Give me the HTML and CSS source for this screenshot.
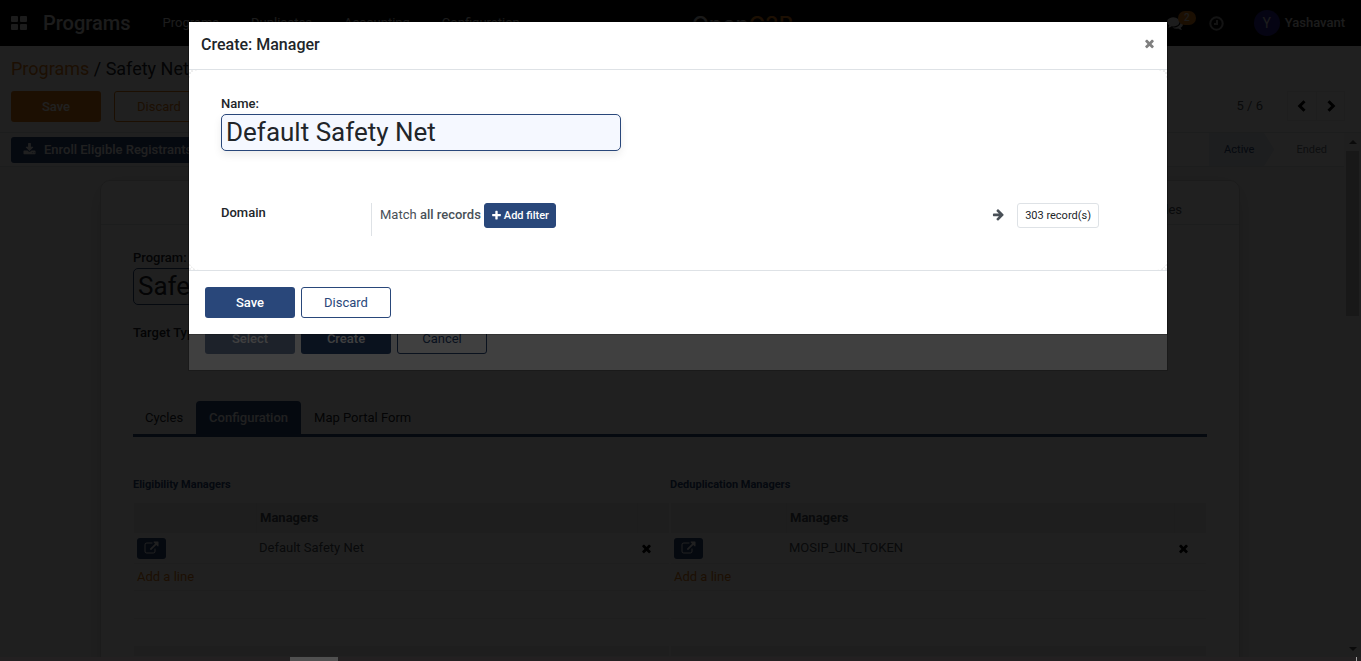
FILE: index.html
```html
<!DOCTYPE html>
<html lang="en">
<head>
<meta charset="utf-8">
<title>Programs</title>
<link rel="stylesheet" href="styles.css">
</head>
<body>
<svg class="sprite" aria-hidden="true">
  <symbol id="times" viewBox="0 0 1792 1792"><path d="M1490 1322q0 40-28 68l-136 136q-28 28-68 28t-68-28l-294-294-294 294q-28 28-68 28t-68-28l-136-136q-28-28-28-68t28-68l294-294-294-294q-28-28-28-68t28-68l136-136q28-28 68-28t68 28l294 294 294-294q28-28 68-28t68 28l136 136q28 28 28 68t-28 68l-294 294 294 294q28 28 28 68z"/></symbol>
  <symbol id="open" viewBox="0 0 1920 1792"><path d="M1472 992v320q0 119-84.5 203.5t-203.5 84.5h-832q-119 0-203.5-84.5t-84.5-203.5v-832q0-119 84.5-203.5t203.5-84.5h704q14 0 23 9t9 23v64q0 14-9 23t-23 9h-704q-66 0-113 47t-47 113v832q0 66 47 113t113 47h832q66 0 113-47t47-113v-320q0-14 9-23t23-9h64q14 0 23 9t9 23zm384-864v512q0 26-19 45t-45 19-45-19l-176-176-652 652q-10 10-23 10t-23-10l-114-114q-10-10-10-23t10-23l652-652-176-176q-19-19-19-45t19-45 45-19h512q26 0 45 19t19 45z"/></symbol>
</svg>

<div class="app">
  <header class="navbar">
    <button class="apps" aria-label="Apps"><svg width="16" height="14" viewBox="0 0 16 14"><rect width="7" height="6" rx="1"/><rect x="9" width="7" height="6" rx="1"/><rect y="8" width="7" height="6" rx="1"/><rect x="9" y="8" width="7" height="6" rx="1"/></svg></button>
    <a class="brand" href="#">Programs</a>
    <nav class="menu">
      <a href="#">Programs</a><a href="#">Duplicates</a><a href="#">Accounting</a><a href="#">Configuration</a>
    </nav>
    <div class="logo">Open<span>G2P</span></div>
    <div class="systray">
      <button class="chat" aria-label="Messages"><svg width="16" height="16" viewBox="0 0 1792 1792"><path d="M1408 768q0 139-94 257t-256.5 186.5-353.5 68.5q-86 0-176-16-124 88-278 128-36 9-86 16h-3q-11 0-20.5-8t-11.5-21q-1-3-1-6.5t.5-6.5 2-6l2.5-5 3.5-5.5 4-5 4.5-5 4-4.5q5-6 23-25t26-29.500 22.500-29 25-38.500 20.500-44q-124-72-195-177t-71-224q0-139 94-257t256.500-186.500 353.500-68.500 353.500 68.500 256.500 186.500 94 257zm384 256q0 120-71 224.500t-195 176.500q10 24 20.500 44t25 38.500 22.500 29 26 29.500 23 25q1 1 4 4.500t4.500 5 4 5 3.500 5.500l2.500 5 2 6 .5 6.500-1 6.500q-3 14-13 22t-22 7q-50-7-86-16-154-40-278-128-90 16-176 16-271 0-472-132 58 4 88 4 161 0 309-45t264-129q125-92 192-212t67-254q0-77-23-152 129 71 204 178t75 230z"/></svg><span class="badge">2</span></button>
      <button class="clock" aria-label="Activities"><svg width="15" height="15" viewBox="0 0 15 15"><circle cx="7.500" cy="7.500" r="6.200"/><path d="M8 4v4H5"/></svg></button>
      <button class="user"><span class="avatar">Y</span>Yashavant</button>
    </div>
  </header>

  <section class="panel">
    <div class="crumbs"><a href="#">Programs</a> / Safety Net</div>
    <div class="panel-row">
      <button class="btn orange">Save</button>
      <button class="btn orange-line">Discard</button>
      <span class="pager">5 / 6</span>
      <div class="pager-buttons">
        <button aria-label="Previous"><svg width="12" height="12" viewBox="0 0 12 12"><path d="M8.500 1.200L3.700 6l4.800 4.800"/></svg></button>
        <button aria-label="Next"><svg width="12" height="12" viewBox="0 0 12 12"><path d="M3.500 1.200L8.300 6l-4.800 4.800"/></svg></button>
      </div>
    </div>
  </section>

  <div class="scroller">
    <main class="content">
      <div class="statusbar">
        <button class="enroll"><svg width="13" height="13" viewBox="0 0 1792 1792"><path d="M1344 1344q0-26-19-45t-45-19-45 19-19 45 19 45 45 19 45-19 19-45zm256 0q0-26-19-45t-45-19-45 19-19 45 19 45 45 19 45-19 19-45zm128-224v320q0 40-28 68t-68 28h-1472q-40 0-68-28t-28-68v-320q0-40 28-68t68-28h465l135 136q58 56 136 56t136-56l136-136h464q40 0 68 28t28 68zm-325-569q17 41-14 70l-448 448q-18 19-45 19t-45-19l-448-448q-31-29-14-70 17-39 59-39h256v-448q0-26 19-45t45-19h256q26 0 45 19t19 45v448h256q42 0 59 39z"/></svg>Enroll Eligible Registrants</button>
        <div class="stages"><button class="stage active">Active</button><button class="stage">Ended</button></div>
      </div>
      <div class="sheet">
        <div class="stat-row"><button class="stat">Cycles</button></div>
        <div class="form">
          <label class="label" for="program">Program:</label>
          <input class="big-input" id="program" value="Safety Net">
          <div class="label target">Target Type</div>
          <div class="tabs" role="tablist">
            <button role="tab">Cycles</button><button role="tab" class="current" aria-selected="true">Configuration</button><button role="tab">Map Portal Form</button>
          </div>
          <div class="groups">
            <section class="group">
              <h2>Eligibility Managers</h2>
              <table>
                <colgroup><col class="col-open"><col><col class="col-del"></colgroup>
                <thead><tr><th></th><th>Managers</th><th></th></tr></thead>
                <tbody>
                  <tr><td><button class="open" aria-label="Open"><svg width="15" height="14"><use href="#open"/></svg></button></td><td>Default Safety Net</td><td><button class="del" aria-label="Delete"><svg width="13" height="13"><use href="#times"/></svg></button></td></tr>
                  <tr class="add"><td colspan="3"><a href="#">Add a line</a></td></tr>
                  <tr class="blank"><td colspan="3"></td></tr>
                  <tr class="blank"><td colspan="3"></td></tr>
                </tbody>
                <tfoot><tr><td></td><td></td><td></td></tr></tfoot>
              </table>
            </section>
            <section class="group">
              <h2>Deduplication Managers</h2>
              <table>
                <colgroup><col class="col-open-small"><col><col class="col-del"></colgroup>
                <thead><tr><th></th><th>Managers</th><th></th></tr></thead>
                <tbody>
                  <tr><td><button class="open" aria-label="Open"><svg width="15" height="14"><use href="#open"/></svg></button></td><td>MOSIP_UIN_TOKEN</td><td><button class="del" aria-label="Delete"><svg width="13" height="13"><use href="#times"/></svg></button></td></tr>
                  <tr class="add"><td colspan="3"><a href="#">Add a line</a></td></tr>
                  <tr class="blank"><td colspan="3"></td></tr>
                  <tr class="blank"><td colspan="3"></td></tr>
                </tbody>
                <tfoot><tr><td></td><td></td><td></td></tr></tfoot>
              </table>
            </section>
          </div>
        </div>
      </div>
    </main>
    <div class="scrollbar" aria-hidden="true"><i class="up"></i><i class="thumb"></i><i class="down"></i></div>
  </div>
</div>

<div class="overlay first">
  <div class="dialog">
    <div class="dialog-space"></div>
    <footer class="dialog-foot">
      <button class="btn navy" disabled>Select</button>
      <button class="btn navy">Create</button>
      <button class="btn navy-line">Cancel</button>
    </footer>
  </div>
</div>

<div class="overlay second">
  <div class="dialog" role="dialog" aria-labelledby="dialog-title">
    <header class="dialog-head">
      <h1 id="dialog-title">Create: Manager</h1>
      <button class="close" aria-label="Close"><svg width="13" height="13"><use href="#times"/></svg></button>
    </header>
    <div class="dialog-body">
      <div class="dialog-sheet">
        <label class="label" for="name">Name:</label>
        <input class="big-input tinted" id="name" value="Default Safety Net">
        <div class="domain">
          <div class="label">Domain</div>
          <div class="domain-value">
            <span class="match">Match <b>all records</b></span>
            <button class="small-btn filled"><svg width="11" height="11" viewBox="0 0 1792 1792"><path d="M1600 736v192q0 40-28 68t-68 28h-416v416q0 40-28 68t-68 28h-192q-40 0-68-28t-28-68v-416h-416q-40 0-68-28t-28-68v-192q0-40 28-68t68-28h416v-416q0-40 28-68t68-28h192q40 0 68 28t28 68v416h416q40 0 68 28t28 68z"/></svg>Add filter</button>
            <svg class="arrow" width="13" height="13" viewBox="0 0 1792 1792"><path d="M1600 960q0 54-37 91l-651 651q-39 37-91 37-51 0-90-37l-75-75q-38-38-38-91t38-91l293-293h-704q-52 0-84.500-37.500t-32.500-90.500v-128q0-53 32.500-90.500t84.500-37.500h704l-293-294q-38-36-38-90t38-90l75-75q38-38 90-38 53 0 91 38l651 651q37 35 37 90z"/></svg>
            <button class="small-btn">303 record(s)</button>
          </div>
        </div>
      </div>
    </div>
    <footer class="dialog-foot">
      <button class="btn navy">Save</button>
      <button class="btn navy-line">Discard</button>
    </footer>
  </div>
</div>
<div class="bottom-strip" aria-hidden="true"><i class="grip"></i><i class="tick"></i></div>
</body>
</html>
```

FILE: styles.css
```css
:root {
  --navy: #29477a;
  --orange: #dc7a14;
  --ink: #212529;
  --line: #dee2e6;
}
* { box-sizing: border-box; }
body {
  margin: 0;
  font: 13px/20px Roboto, "Liberation Sans", sans-serif;
  color: var(--ink);
  overflow: hidden;
}
button, input { font: inherit; color: inherit; }
button { background: none; border: 0; padding: 0; cursor: pointer; }
a { color: inherit; text-decoration: none; }
svg { fill: currentColor; display: block; }
.sprite { display: none; }

.app { height: 100vh; display: flex; flex-direction: column; background: #fff; }

/* top navigation */
.navbar {
  height: 46px;
  flex: none;
  display: flex;
  align-items: center;
  position: relative;
  padding: 0 16px 0 11px;
  background: #060606;
  color: #dcdcdc;
}
.brand { margin-left: 16px; font-size: 20px; font-weight: 500; }
.menu { display: flex; gap: 32px; margin-left: 32px; }
.logo {
  position: absolute;
  left: 692px;
  top: 10px;
  font: 500 22px/28px Inter, sans-serif;
  color: #c8c8c8;
}
.logo span { color: var(--orange); }
.systray { display: flex; align-items: center; margin-left: auto; }
.chat { display: flex; align-items: center; }
.badge {
  margin: -10px 0 0 -5px;
  width: 18px;
  border-radius: 7px;
  background: #d97813;
  font-size: 10px;
  line-height: 14px;
  font-weight: 500;
}
.clock { margin-left: 13px; }
.clock svg { fill: none; stroke: #989898; stroke-width: 2; }
.user { display: flex; align-items: center; gap: 5px; margin-left: 30px; font-weight: 500; }
.avatar {
  width: 26px;
  border-radius: 50%;
  background: #2a2399;
  font-size: 14px;
  line-height: 26px;
  font-weight: 400;
}

/* control panel */
.panel { flex: none; padding: 11px 16px 10px 11px; border-bottom: 1px solid var(--line); }
.crumbs { font-size: 18px; line-height: 24px; }
.crumbs a { color: var(--orange); }
.panel-row { display: flex; align-items: flex-start; margin-top: 10px; }
.btn {
  width: 90px;
  height: 31px;
  border: 1px solid transparent;
  border-radius: 3px;
}
.orange { background: var(--orange); color: #fff; font-weight: 500; }
.orange-line { border-color: var(--orange); color: var(--orange); margin-left: 13px; }
.navy { background: var(--navy); color: #fff; font-weight: 500; }
.navy:disabled { opacity: .65; }
.navy-line { border-color: var(--navy); color: var(--navy); background: #fff; }
.pager { margin-left: auto; line-height: 30px; color: #495057; }
.pager-buttons { display: flex; margin-left: 24px; border: 1px solid #efefef; }
.pager-buttons button { width: 28px; height: 28px; display: grid; place-items: center; }
.pager-buttons button + button { border-left: 1px solid #efefef; }
.pager-buttons svg { fill: none; stroke: #000; stroke-width: 3; }

/* scrolling record area */
.scroller { flex: 1; min-height: 0; display: flex; overflow: hidden; }
.content { flex: 1; min-width: 0; background: #f2f2f2; }
.statusbar {
  display: flex;
  justify-content: space-between;
  align-items: center;
  height: 34px;
  padding-left: 11px;
  background: #fff;
  border-bottom: 1px solid var(--line);
}
.enroll {
  display: flex;
  align-items: center;
  gap: 8px;
  height: 26px;
  padding: 0 12px;
  border-radius: 3px;
  background: var(--navy);
  color: #fff;
  font-weight: 500;
}
.stages { display: flex; align-self: stretch; font-size: 11px; }
.stage { padding: 0 17px 0 22px; color: #6c757d; }
.stage.active {
  padding: 0 20px 0 15px;
  color: var(--navy);
  background: #e4eaf2;
  clip-path: polygon(0 0, 55px 0, 100% 50%, 55px 100%, 0 100%);
}
.sheet {
  margin: 13px 104px 0 100px;
  height: 1200px;
  background: #fff;
  border: 1px solid #d5d5d5;
  border-radius: 10px;
  box-shadow: 0 5px 20px -15px #000;
}
.stat-row {
  display: flex;
  justify-content: flex-end;
  height: 44px;
  padding: 0 57px;
  background: #fbfbfb;
  border-bottom: 1px solid var(--line);
  border-radius: 10px 10px 0 0;
}
.stat { color: #495057; padding-top: 15px; }
.form { padding: 23px 32px; }
.label { display: block; font-weight: 500; line-height: 20px; }
.big-input {
  display: block;
  width: 400px;
  height: 37px;
  padding: 0 4px 2px;
  border: 1px solid var(--navy);
  border-radius: 5px;
  background: #fff;
  font-size: 26px;
}
.target { margin-top: 18px; }
.tabs { display: flex; gap: 1px; margin-top: 58px; border-bottom: 3px solid var(--navy); }
.tabs button { height: 33px; padding: 0 12px; }
.tabs .current {
  padding: 0 13px;
  border-radius: 4px 4px 0 0;
  background: var(--navy);
  color: #fff;
  font-weight: 500;
}
.groups { display: grid; grid-template-columns: 1fr 1fr; margin-top: 38px; }
.group h2 { margin: 0; font-size: 11px; line-height: 20px; font-weight: 700; color: var(--navy); }
.group table {
  width: calc(100% - 2px);
  margin: 8px 1px 0;
  table-layout: fixed;
  border-collapse: separate;
  border-spacing: 0;
}
.col-open { width: 122px; }
.col-open-small { width: 115px; }
.col-del { width: 32px; }
.group th, .group td { padding: 0 3px; border-bottom: 1px solid #ebedef; text-align: left; color: #495057; }
.group th { height: 30px; background: #eee; font-weight: 700; }
.group th + th { border-left: 1px solid #e2e2e2; }
.group tbody td { height: 31px; }
.group tbody .add td { height: 27px; color: var(--orange); }
.group tbody .blank td { height: 28px; }
.group tfoot td { height: 9px; background: #eee; }
.open {
  display: grid;
  place-items: center;
  width: 29px;
  height: 21px;
  border-radius: 3px;
  background: var(--navy);
  color: #fff;
}
.del { display: block; color: #000; }

.scrollbar {
  width: 17px;
  display: flex;
  flex-direction: column;
  align-items: center;
  padding: 7px 0 10px;
  background: #f1f1f1;
}
.up { border: 4px solid transparent; border-top: 0; border-bottom-color: #505050; }
.thumb { width: 13px; height: 165px; margin-top: 7px; background: #c1c1c1; }
.down { border: 4px solid transparent; border-bottom: 0; border-top-color: #505050; margin-top: auto; }

/* stacked dialogs */
.overlay { position: fixed; inset: 0; padding: 21px 5px 0 0; }
.first { background: rgba(0, 0, 0, .5); }
.second { background: rgba(0, 0, 0, .75); }
.dialog {
  max-width: 980px;
  margin: 0 auto;
  background: #fff;
  background-clip: padding-box;
  border: 1px solid rgba(0, 0, 0, .2);
}
.dialog-space { height: 284px; }
.dialog-head {
  display: flex;
  align-items: flex-start;
  justify-content: space-between;
  height: 48px;
  padding: 11px 11px 0 12px;
  border-bottom: 1px solid var(--line);
}
.dialog-head h1 { margin: 0; font-size: 16px; line-height: 24px; font-weight: 500; }
.close { padding: 4px 0; color: #7f7f7f; }
.dialog-body { background: repeating-conic-gradient(#eee 0 25%, #fff 0 50%) 0 0 / 4px 4px; }
.dialog-sheet { padding: 24px 32px 34px; background: #fff; border-radius: 10px; }
.tinted { background: #f5f8ff; box-shadow: 0 4px 8px rgba(0, 0, 0, .08); }
.domain { display: flex; margin-top: 52px; }
.domain > .label { width: 150px; }
.domain-value {
  flex: 1;
  display: flex;
  align-items: flex-start;
  height: 33px;
  padding: 0 36px 0 8px;
  border-left: 1px solid var(--line);
}
.match { margin-right: 3px; line-height: 24px; color: #495057; }
.match b { font-weight: 500; }
.small-btn {
  display: flex;
  align-items: center;
  gap: 2px;
  height: 25px;
  padding: 0 7px;
  border: 1px solid var(--line);
  border-radius: 3px;
  font-size: 11px;
}
.small-btn.filled { padding: 0 6px; background: var(--navy); border-color: var(--navy); color: #fff; font-weight: 500; }
.arrow { margin: 5px 12px 0 auto; color: #495057; }
.dialog-foot {
  display: flex;
  gap: 6px;
  padding: 16px;
  border-top: 1px solid var(--line);
}

.bottom-strip { position: fixed; left: 0; right: 0; bottom: 0; height: 4px; background: #232021; }
.grip { position: absolute; left: 290px; width: 48px; height: 4px; background: #505050; }
.tick { position: absolute; right: 4px; width: 1px; height: 4px; background: #a0a0a0; }
```
